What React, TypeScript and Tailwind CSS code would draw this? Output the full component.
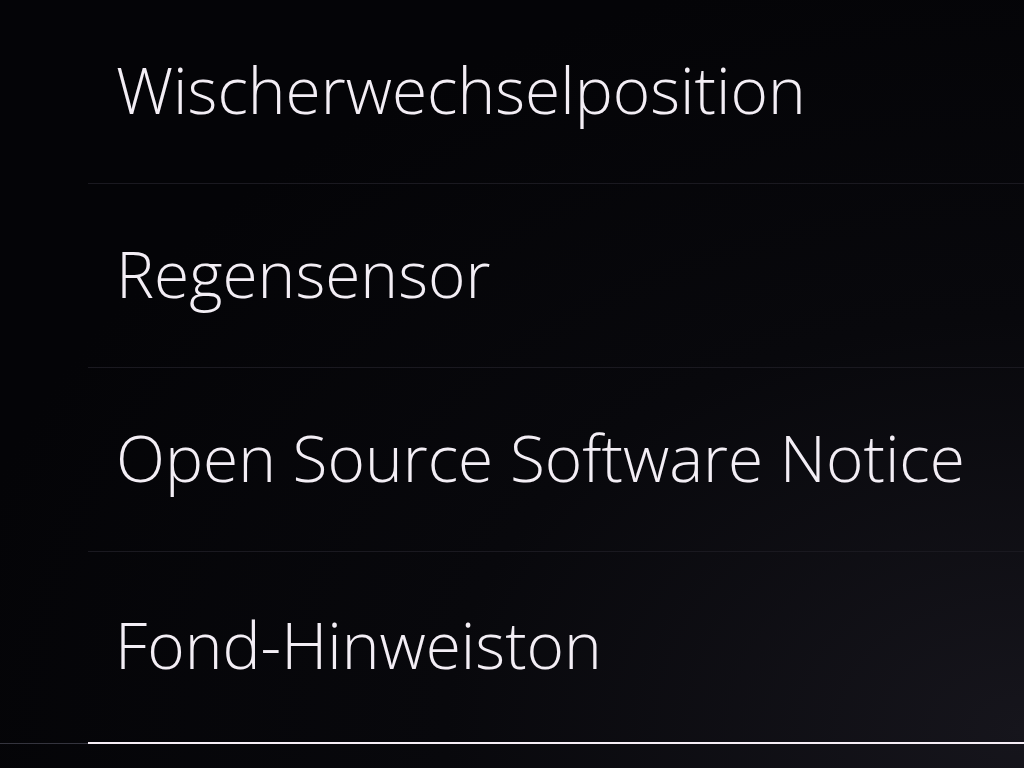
const items = [
  "Wischerwechselposition",
  "Regensensor",
  "Open Source Software Notice",
  "Fond-Hinweiston",
];

export default function App() {
  return (
    <div
      className="w-[1024px] h-[768px] overflow-hidden bg-[radial-gradient(ellipse_at_100%_95%,#16151c_0%,#08080c_40%,#040407_75%)] text-[#f3eef5]"
      style={{ fontFamily: '"Open Sans", "Liberation Sans", sans-serif' }}
    >
      <div className="flex flex-col">
        {items.map((label, i) => (
          <div
            key={label}
            className={
              i === items.length - 1
                ? "ml-[88px] h-[192px] pl-[27px] flex items-center border-b-2 border-[#f6eef6]"
                : "ml-[88px] h-[184px] pl-[28px] flex items-center border-b border-[#1a1920]"
            }
          >
            <span className="text-[64px] font-[350] leading-none -mt-[4px]">{label}</span>
          </div>
        ))}
        <div className="h-px w-[88px] -mt-[1px] bg-[#34343e]" />
      </div>
    </div>
  );
}
